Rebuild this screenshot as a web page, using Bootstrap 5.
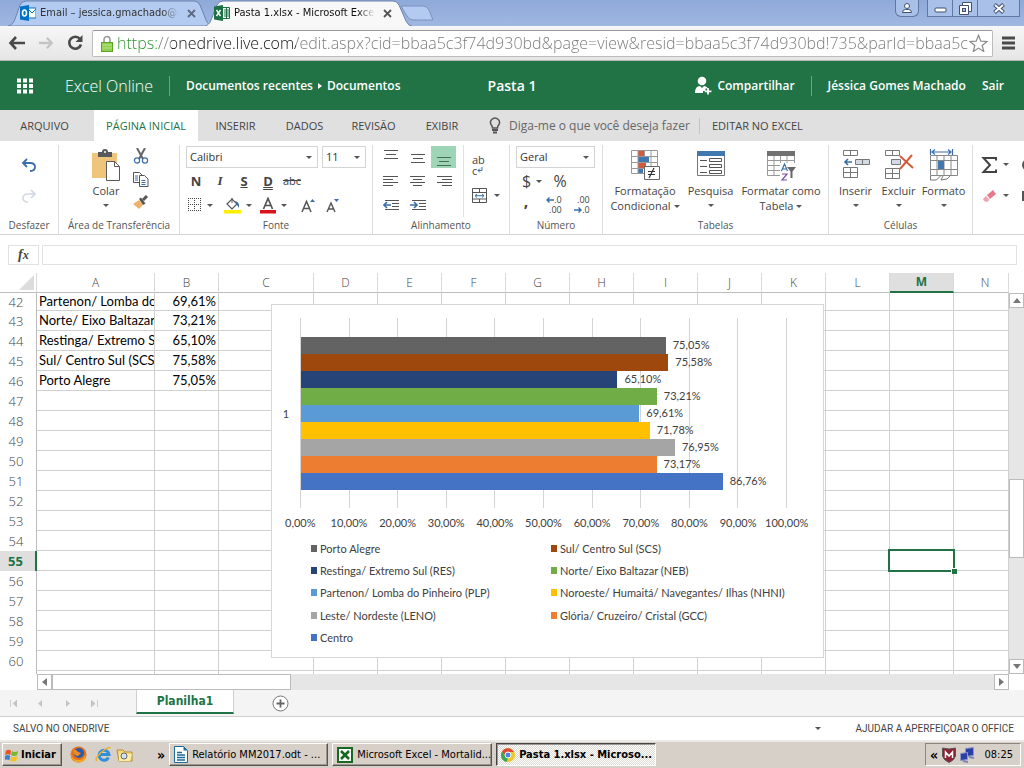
<!DOCTYPE html>
<html lang="pt-BR">
<head>
<meta charset="utf-8">
<meta name="viewport" content="width=device-width, initial-scale=1">
<title>Pasta 1.xlsx - Microsoft Excel Online</title>
<link href="https://cdn.jsdelivr.net/npm/bootstrap@5.3.0/dist/css/bootstrap.min.css" rel="stylesheet">
<style>
:root{--ui:"Open Sans","Noto Sans",sans-serif;--win:"DejaVu Sans Condensed","DejaVu Sans",sans-serif;--calc:Lato,"Open Sans",sans-serif;--green:#217346;--line:#d4d4d4}
body{font:11px/16px var(--ui);color:#444;background:#fff;overflow:hidden}
button,input,select{font:inherit;color:inherit;background:none;border:0;padding:0;margin:0;border-radius:0}
a{color:inherit;text-decoration:none}
svg{display:block;flex:none}
.caret{width:0;height:0;border:3px solid transparent;border-top-color:#555;border-bottom:0;flex:none}
.screen>*{flex-shrink:0}
.screen>main{flex:1 1 0;min-height:0}

/* browser window */
.strip{height:26px;background:linear-gradient(#8fa9d8,#a0b7e2);font:11px/16px var(--win);color:#333}
.btab{position:relative;height:26px}
.btab>svg.shape{position:absolute;inset:0;width:100%;height:100%}
.btab>:not(.shape){position:relative}
.btab .title{overflow:hidden;white-space:nowrap;-webkit-mask-image:linear-gradient(to right,#000 88%,transparent)}
.t-mail{width:204px;padding:0 12px 0 12px}.t-xls{width:206px;margin-left:-6px;padding:0 20px 0 8px;color:#111;z-index:1}
.wbtn{height:17px;border:1px solid #62779f;border-top:0;display:flex;align-items:center;justify-content:center;background:#a9c0e8}
.toolbar{height:35px;background:linear-gradient(#f7f7f7,#e6e6e6);border-bottom:1px solid #b8b8b8}
.urlbox{height:27px;background:#fff;border:1px solid #bcbcbc;border-top-color:#999;border-radius:2px}
.urlbox input{font:16px/22px "Open Sans",sans-serif;font-weight:300;min-width:0;color:transparent;background:linear-gradient(to right,#2a8f2a 0 43px,#777 43px 54px,#111 54px 179px,#777 179px);-webkit-background-clip:text;background-clip:text}

/* application header */
.apphead{height:49px;background:var(--green);color:#fff;font:600 12px/16px var(--ui)}
.apphead .brand{font-weight:300;font-size:16px}
.apphead .docname{font-size:14px}
.apphead .vr-thin{width:1px;height:20px;background:#6fa287}
.crumbs{gap:5px}
.crumb-arrow{width:0;height:0;border:3px solid transparent;border-left:4px solid #fff;border-right:0}

.rtabs{height:31px;background:#e0e0e0}
.rtabs .rt{height:31px;text-align:center}
.rtabs .rt.on{background:#fff;color:var(--green)}
.rtabs input{font-size:12px}
.rtabs input::placeholder{color:#666;opacity:1}
.ribbon{height:94px;padding-top:4px;border-bottom:1px solid var(--line)}
.rgroup{border-right:1px solid #dcdcdc;height:89px;display:flex;flex-direction:column;flex:none}
.rgroup .gbody{height:72px;display:flex;flex:none}
.rgroup .glabel{font-size:10px;line-height:17px;text-align:center;color:#555;white-space:nowrap}
.r24{height:24px;display:flex;align-items:center}
.r31{height:31px;display:flex;align-items:center}
.ib{width:24px;height:22px;display:inline-flex;align-items:center;justify-content:center;flex:none}
.ibw{width:36px;height:22px;display:inline-flex;align-items:center;gap:5px;padding-left:4px;flex:none}
.al{width:27px}
.al.on{background:#9fd5b7;width:25px}
.dec{font-size:9px;line-height:10px}
.wrapt{flex-direction:column;justify-content:center;align-items:flex-start;line-height:11px}
.bigbtn{display:flex;flex-direction:column;align-items:center;padding-top:4px;line-height:15px;white-space:nowrap}
.bigbtn svg{height:32px;margin-bottom:2px}
.bigbtn .caret{margin-top:6px}
.bigbtn .ln{display:flex;align-items:center;gap:3px}
.bigbtn .ln .caret{margin-top:2px}
.pick{position:relative;height:22px;border:1px solid var(--line);display:flex}
.pick select{appearance:none;width:100%;padding-left:3px;color:#333;line-height:20px}
.pick::after{content:"";position:absolute;right:5px;top:9px;border:3px solid transparent;border-top-color:#555;border-bottom:0;pointer-events:none}
.fmt{font-size:13px;color:#444}

.fbar{padding:10px 7px 8px 8px;gap:3px}
.fbar>*{height:20px;border:1px solid #e1e1e1}
.fbar button{width:31px;font:italic 700 14px/16px "Liberation Serif",serif}

/* worksheet */
.sheet{position:relative;min-height:0;overflow:hidden}
.gridt{table-layout:fixed;width:100%;border-collapse:separate;border-spacing:0;font:13px/20px var(--calc);color:#000}
.gridt th{font:300 12px/18px var(--ui);color:#444;text-align:center;border-right:1px solid #dadada;border-bottom:1px solid #cfcfcf;padding:0;white-space:nowrap}
.gridt thead th{height:20px;border-bottom-color:#bdbdbd}
.gridt thead th:last-child{padding-left:8px}
.gridt tbody th{border-bottom:0;border-right-color:#bdbdbd;padding-right:4px;font-size:13px;line-height:19px}
.gridt td{height:20px;line-height:19px;padding:0 2px;border-right:1px solid #d0d0d0;border-bottom:1px solid #d0d0d0;overflow:hidden;white-space:nowrap}
.gridt tr.cut td,.gridt tr.cut th{height:18px;line-height:17px}
.gridt .num{text-align:right}
.gridt thead th.cur{background:#dfdfdf;color:var(--green);font-weight:700;border-bottom:2px solid var(--green)}
.gridt tbody th.cur{background:#dfdfdf;color:var(--green);font-weight:700;border-right:2px solid var(--green)}
.gridt td.cur{position:relative;overflow:visible}
.gridt td.cur::before{content:"";position:absolute;inset:-2px;border:2px solid var(--green)}
.gridt td.cur::after{content:"";position:absolute;right:-4px;bottom:-4px;width:6px;height:6px;background:var(--green);border:solid #fff;border-width:1px 0 0 1px}
.corner{width:0;height:0;border:solid transparent;border-width:0 0 15px 15px;border-bottom-color:#dcdcdc;margin:0 2px 0 auto}
.chart{position:absolute;left:271px;top:31px;width:553px;background:#fff;border:1px solid #d6d6d6;padding:13px 0 8px;font:11px/17px var(--calc);color:#404040}
.plot{position:relative;height:190px;padding:19px 0;margin-right:36px}
.plot .glines{position:absolute;inset:0;display:flex;border-right:1px solid #d4d4d4}
.plot .glines i{flex:1;border-left:1px solid #d4d4d4}
.plot .bar-row{position:relative;display:flex;height:17px;line-height:16px;padding-left:1px}
.plot .bar-row span{margin-left:7px}
.cat{width:28px;text-align:center}
.axis{height:29px;margin:0 12px 0 4px;align-items:center}
.axis span{flex:1 1 0;text-align:center}
.legend{display:grid;grid-template-columns:240px auto;grid-auto-rows:1fr;height:112px;padding-left:39px;align-items:center}
.legend div{display:flex;align-items:center;gap:3px}
.legend b{width:6px;height:7px}
.vbar{width:15px;background:#e6e6e6;margin-top:20px}
.sbtn{width:15px;height:15px;background:#fff;border:1px solid #bbb;display:flex;align-items:center;justify-content:center;flex:none}
.vbar .thumb,.hbar .thumb{background:#fff;border:1px solid #bbb}
.hbar{height:16px;background:#e6e6e6;margin:0 15px 0 37px}
.hbar .sbtn{height:16px}
.tabsbar{height:27px;background:#f4f4f4;border-bottom:1px solid #cfcfcf}
.tabsbar .sh{width:98px;height:24px;background:#fff;color:var(--green);font:700 12px/20px var(--win);border:1px solid #cfcfcf;border-top:0;border-bottom:2px solid var(--green)}
.status{height:23px;font:10px/16px Roboto,sans-serif;color:#444}

/* taskbar */
.taskbar{height:28px;background:#d6d0c8;border-top:2px solid #eceae6;font:11px/16px var(--win);color:#000;padding:1px 3px 2px 2px}
.tb{height:23px;background:#d6d0c8;border:1px solid;border-color:#fff #555 #555 #fff;box-shadow:inset -1px -1px #9a958d;display:flex;align-items:center;white-space:nowrap;overflow:hidden;gap:4px;padding-left:4px}
.tb.start{gap:2px;padding-left:2px;width:60px}
.tb.down{background:repeating-conic-gradient(#fff 0 25%,#dcd8d2 0 50%) 0 0/2px 2px;border-color:#444 #fff #fff #444;box-shadow:inset 1px 1px #999;font-weight:700}
.chev{font-size:14px;font-weight:700}
.tray{height:23px;border:1px solid;border-color:#8a857d #fff #fff #8a857d}
</style>
</head>
<body>
<div class="screen d-flex flex-column vh-100">

<div class="strip d-flex align-items-center">
  <div class="btab t-mail d-flex align-items-center ms-2">
    <svg class="shape" viewBox="0 0 204 26" preserveAspectRatio="none"><path d="M0 26Q5 25 7 19L12 5Q14 1 18 1H186Q190 1 192 5L198 20Q200 25 204 26Z" fill="#b3cbf0" stroke="#6c82ad"/></svg>
    <svg width="16" height="16" viewBox="0 0 16 16"><path d="M8 3h8v10H8z" fill="#fff" stroke="#0072c6"/><path d="M8 4l4 4 4-4" fill="none" stroke="#0072c6"/><path d="M0 1.500l9-1.500v16l-9-1.500z" fill="#0072c6"/><ellipse cx="4.500" cy="8" rx="2" ry="3" fill="none" stroke="#fff" stroke-width="1.600"/></svg>
    <span class="title flex-fill ms-1">Email – jessica.gmachado@outlook.com</span>
    <button aria-label="Fechar guia" class="ms-2 me-1"><svg width="9" height="9" viewBox="0 0 9 9"><path d="M1 1l7 7M8 1l-7 7" stroke="#5d6980" stroke-width="1.800"/></svg></button>
  </div>
  <div class="btab t-xls d-flex align-items-center">
    <svg class="shape" viewBox="0 0 206 26" preserveAspectRatio="none"><path d="M-4 27Q3 26 5 20L11 5Q13 1 17 1H187Q191 1 193 5L200 21Q202 26 208 27Z" fill="#f8f8f8" stroke="#6c82ad"/></svg>
    <svg width="16" height="16" viewBox="0 0 16 16"><path d="M8 2.500h7.500v11H8z" fill="#fff" stroke="#1e7145"/><path d="M10 5h5M10 7h5M10 9h5M10 11h5M12.500 3v10" stroke="#1e7145"/><path d="M0 1.500l9-1.500v16l-9-1.500z" fill="#1e7145"/><path d="M2.500 5l4 6M6.500 5l-4 6" stroke="#fff" stroke-width="1.400"/></svg>
    <span class="title flex-fill ms-1">Pasta 1.xlsx - Microsoft Excel Online</span>
    <button aria-label="Fechar guia" class="ms-2"><svg width="9" height="9" viewBox="0 0 9 9"><path d="M1 1l7 7M8 1l-7 7" stroke="#555" stroke-width="1.800"/></svg></button>
  </div>
  <button aria-label="Nova guia" style="margin-left:-12px"><svg width="36" height="16" viewBox="0 0 36 16"><path d="M1 1h22q4 0 6 4l4 10H13q-4 0-6-4z" fill="#b3cbf0" stroke="#7b92bd"/></svg></button>
  <div class="ms-auto d-flex align-self-start">
    <button class="wbtn rounded-bottom me-2" style="width:24px" aria-label="Perfil"><svg width="12" height="12" viewBox="0 0 12 12"><circle cx="6" cy="4" r="2.500" fill="#fff" stroke="#40506e"/><path d="M1.500 10.500q0-3 3-3h3q3 0 3 3z" fill="#fff" stroke="#40506e"/></svg></button>
    <button class="wbtn" style="width:26px" aria-label="Minimizar"><svg width="13" height="12" viewBox="0 0 13 12"><rect x="1" y="6" width="11" height="4" rx="1" fill="#fff" stroke="#40506e"/></svg></button>
    <button class="wbtn border-start-0" style="width:25px" aria-label="Restaurar"><svg width="14" height="13" viewBox="0 0 14 13"><path d="M4.500 .5h9v9h-3v3h-9v-9h3z" fill="#fff" stroke="#40506e"/><path d="M4.500 3.500h6v6" fill="none" stroke="#40506e"/><rect x="4.500" y="6.500" width="3" height="3" fill="#a9c0e8" stroke="#40506e"/></svg></button>
    <button class="wbtn border-start-0 me-1" style="width:42px" aria-label="Fechar"><svg width="12" height="11" viewBox="0 0 12 11"><path d="M1.500 1.500l9 8M10.500 1.500l-9 8" stroke="#40506e" stroke-width="4"/><path d="M2 2l8 7M10 2l-8 7" stroke="#fff" stroke-width="2"/></svg></button>
  </div>
</div>

<div class="toolbar d-flex align-items-center">
  <button class="ms-2 me-2 pe-1" aria-label="Voltar"><svg width="18" height="14" viewBox="0 0 18 14"><path d="M8 1L2.500 7L8 13M3 7h14" fill="none" stroke="#4a4a4a" stroke-width="2.600"/></svg></button>
  <button class="me-2 pe-1" aria-label="Avançar"><svg width="16" height="14" viewBox="0 0 18 14"><path d="M10 1l5.500 6L10 13M15 7H1" fill="none" stroke="#c4c4c4" stroke-width="2.600"/></svg></button>
  <button class="me-2" aria-label="Recarregar"><svg width="18" height="18" viewBox="0 0 18 18"><path d="M14 5A6 6 0 1 0 15 10.500" fill="none" stroke="#4a4a4a" stroke-width="2.600"/><path d="M16.500 1v7h-7z" fill="#4a4a4a"/></svg></button>
  <div class="urlbox d-flex align-items-center flex-fill" style="min-width:0">
    <svg class="ms-2 me-1" width="12" height="17" viewBox="0 0 12 17"><path d="M3 8V5a3 3.500 0 0 1 6 0v3" fill="none" stroke="#999" stroke-width="1.600"/><rect x=".5" y="7.500" width="11" height="9" fill="#8fd04e" stroke="#5aa428"/><path d="M1 10h10M1 13h10" stroke="#b4e68a"/></svg>
    <input class="flex-fill" aria-label="Endereço" value="https://onedrive.live.com/edit.aspx?cid=bbaa5c3f74d930bd&amp;page=view&amp;resid=bbaa5c3f74d930bd!735&amp;parId=bbaa5c">
    <button class="me-1" aria-label="Favorito"><svg width="19" height="18" viewBox="0 0 19 18"><path d="M9.500 1.200l2.300 5.900 6.200.4-4.800 4 1.600 6-5.300-3.400L4.200 17.500l1.600-6L1 7.500l6.200-.4z" fill="#fff" stroke="#8a8a8a" stroke-width="1.200"/></svg></button>
  </div>
  <button class="ms-2 me-2" aria-label="Menu"><svg width="15" height="14" viewBox="0 0 15 14"><path d="M1 2h13M1 7h13M1 12h13" stroke="#4a4a4a" stroke-width="3"/></svg></button>
</div>

<header class="apphead d-flex align-items-center position-relative">
  <button aria-label="Iniciador de aplicativos" style="margin-left:17px"><svg width="16" height="16" viewBox="0 0 16 16"><path d="M0 2.500h16M0 8h16M0 13.500h16" stroke="#fff" stroke-width="4" stroke-dasharray="4 2"/></svg></button>
  <a href="#" class="brand mx-3 ps-3">Excel Online</a>
  <span class="vr-thin"></span>
  <nav class="crumbs d-flex align-items-center ms-3" aria-label="Local"><a href="#">Documentos recentes</a><span class="crumb-arrow"></span><a href="#">Documentos</a></nav>
  <span class="docname position-absolute start-50 translate-middle-x">Pasta 1</span>
  <button class="ms-auto d-flex align-items-center gap-1"><svg width="18" height="19" viewBox="0 0 18 19"><circle cx="7" cy="5" r="4.300" fill="#fff"/><path d="M0 17q0-7 5-7l2 2 2-2q3 0 4 2.500h-2.500v2.500H8V17z" fill="#fff"/><path d="M13 12v6.500M9.800 15.300h6.700" stroke="#fff" stroke-width="1.800"/></svg>Compartilhar</button>
  <span class="vr-thin ms-3 me-3"></span>
  <a href="#" class="me-3">Jéssica Gomes Machado</a>
  <a href="#" style="margin-right:20px">Sair</a>
</header>

<nav class="rtabs d-flex align-items-center" aria-label="Faixa de opções">
  <button class="rt" style="width:94px;padding-right:5px">ARQUIVO</button>
  <button class="rt on" style="width:104px">PÁGINA INICIAL</button>
  <button class="rt" style="width:75px">INSERIR</button>
  <button class="rt" style="width:63px">DADOS</button>
  <button class="rt" style="width:75px">REVISÃO</button>
  <button class="rt" style="width:62px">EXIBIR</button>
  <label for="tell" class="ps-3 pe-2" aria-label="Ajuda"><svg width="12" height="17" viewBox="0 0 12 17"><path d="M3.500 11Q3.500 9 2 7.500A4.500 4.500 0 1 1 10 7.500Q8.500 9 8.500 11z" fill="none" stroke="#555" stroke-width="1.500"/><path d="M3 13h6M4 15.500h4" stroke="#555" stroke-width="1.800"/></svg></label>
  <input id="tell" style="width:190px" placeholder="Diga-me o que você deseja fazer">
  <span class="bg-secondary opacity-25" style="width:1px;height:16px"></span>
  <button class="rt ms-2 ps-1">EDITAR NO EXCEL</button>
</nav>

<section class="ribbon d-flex overflow-hidden" aria-label="Página inicial">
  <div class="rgroup" style="width:59px">
    <div class="gbody flex-column align-items-center pt-1 pb-1">
      <button class="r31" aria-label="Desfazer"><svg width="16" height="14" viewBox="0 0 16 14"><path d="M6 1L2 5l4 4M2 5h7q5 0 5 4t-5 4" fill="none" stroke="#3b6ea8" stroke-width="1.800"/></svg></button>
      <button class="r31" aria-label="Refazer"><svg width="16" height="14" viewBox="0 0 16 14"><path d="M10 1l4 4-4 4M14 5H7Q2 5 2 9t5 4" fill="none" stroke="#d0d8e2" stroke-width="1.600"/></svg></button>
    </div>
    <div class="glabel">Desfazer</div>
  </div>
  <div class="rgroup" style="width:121px">
    <div class="gbody ps-4">
      <button class="bigbtn ms-2"><svg width="30" height="32" viewBox="0 0 30 32"><path d="M1 4h25v25H1z" fill="#eec57a"/><path d="M7 3h4q0-3 3-3t3 3h4v5H7z" fill="#58595b"/><circle cx="14" cy="3" r="1" fill="#fff"/><path d="M15.500 12.500h8l5 5v14h-13z" fill="#fff" stroke="#58595b"/><path d="M23.500 12.500v5h5" fill="none" stroke="#58595b"/></svg>Colar<span class="caret"></span></button>
      <div class="ms-2">
        <button class="ib r24" aria-label="Recortar"><svg width="16" height="16" viewBox="0 0 16 16"><path d="M4 0l6 11M12 0L6 11" stroke="#666" stroke-width="2"/><circle cx="4" cy="12.500" r="2.600" fill="none" stroke="#3b6ea8" stroke-width="1.200"/><circle cx="12" cy="12.500" r="2.600" fill="none" stroke="#3b6ea8" stroke-width="1.200"/></svg></button>
        <button class="ib r24" aria-label="Copiar"><svg width="16" height="16" viewBox="0 0 16 16"><path d="M.5 1.500h6l3 3v7h-9z" fill="#fff" stroke="#555"/><path d="M6.500 4.500h5l3.500 3.500v7.500h-8.500z" fill="#fff" stroke="#555"/><path d="M2 5h3M2 7h3M2 9h3M8.500 9.500h4M8.500 11.500h4M8.500 13.500h4" stroke="#3b6ea8"/></svg></button>
        <button class="ib r24" aria-label="Pincel de formatação"><svg width="16" height="14" viewBox="0 0 16 14"><path d="M0 9l6-4 4 5-4 4z" fill="#eeb36b"/><path d="M6 4l2-1.500 4.500 6L10 10z" fill="#555"/><path d="M10 5l4-4" stroke="#555" stroke-width="3"/></svg></button>
      </div>
    </div>
    <div class="glabel">Área de Transferência</div>
  </div>
  <div class="rgroup" style="width:193px">
    <div class="gbody flex-column ps-1">
      <div class="r24 gap-1" style="padding-left:2px"><div class="pick" style="width:132px"><select aria-label="Fonte"><option>Calibri</option></select></div><div class="pick" style="width:44px"><select aria-label="Tamanho"><option>11</option></select></div></div>
      <div class="r24"><button class="ib fmt fw-bold">N</button><button class="ib fmt fst-italic fw-bold" style="font-family:'Liberation Serif',serif">I</button><button class="ib fmt fw-bold text-decoration-underline">S</button><button class="ib fmt fw-bold" style="text-decoration:underline double">D</button><button class="ib text-decoration-line-through">abc</button></div>
      <div class="r24">
        <button class="ibw" aria-label="Bordas"><svg width="14" height="14" viewBox="0 0 14 14"><path d="M.5 0v13M6.500 0v13M12.500 0v13M0 .5h13M0 6.500h13M0 12.500h13" stroke="#444" stroke-dasharray="1 1"/></svg><span class="caret"></span></button>
        <button class="ibw" aria-label="Cor de preenchimento"><svg width="17" height="17" viewBox="0 0 17 17"><path d="M3 7l5-5 5 5-5 5z" fill="#fff" stroke="#555" stroke-width="1.200"/><path d="M8 6V1" stroke="#555"/><path d="M11 4q5 1 4 7l-2-3z" fill="#3b6ea8"/><path d="M0 13h17v3.500H0z" fill="#ffee00"/></svg><span class="caret"></span></button>
        <button class="ibw" aria-label="Cor da fonte"><svg width="16" height="17" viewBox="0 0 16 17"><path d="M3.500 12L8 1.500l4.500 10.500M5 8.500h6" fill="none" stroke="#555" stroke-width="1.700"/><path d="M0 13h16v3.500H0z" fill="#d8131b"/></svg><span class="caret"></span></button>
        <button class="ib ms-1" aria-label="Aumentar fonte"><svg width="14" height="15" viewBox="0 0 14 15"><path d="M1 14L5.500 3.500 10 14M2.500 10.500h6" fill="none" stroke="#555" stroke-width="1.500"/><path d="M9 4l2.500-3L14 4z" fill="#3b6ea8"/></svg></button>
        <button class="ib" aria-label="Diminuir fonte"><svg width="14" height="15" viewBox="0 0 14 15"><path d="M2 14l4-9 4 9M3.500 11h5" fill="none" stroke="#555" stroke-width="1.400"/><path d="M9 1h5l-2.500 3z" fill="#3b6ea8"/></svg></button>
      </div>
    </div>
    <div class="glabel">Fonte</div>
  </div>
  <div class="rgroup" style="width:137px">
    <div class="gbody">
      <div class="border-end" style="width:91px;padding-left:4px">
        <div class="r24"><button class="ib al" aria-label="Em cima"><svg width="15" height="15" viewBox="0 0 15 15"><path d="M1 .5h14M3 4.500h10M1 8.500h14" stroke="#555"/></svg></button><button class="ib al" aria-label="No meio"><svg width="15" height="15" viewBox="0 0 15 15"><path d="M1 4.500h14M3 8.500h10M1 12.500h14" stroke="#555"/></svg></button><button class="ib al on" aria-label="Embaixo"><svg width="15" height="17" viewBox="0 0 15 17"><path d="M1 8.500h14M3 12.500h10M1 16.500h14" stroke="#4a6b58"/></svg></button></div>
        <div class="r24"><button class="ib al" aria-label="Esquerda"><svg width="15" height="12" viewBox="0 0 15 12"><path d="M0 1.500h15M0 4.500h10M0 7.500h15M0 10.500h10" stroke="#555"/></svg></button><button class="ib al" aria-label="Centro"><svg width="15" height="12" viewBox="0 0 15 12"><path d="M0 1.500h15M3 4.500h9M0 7.500h15M3 10.500h9" stroke="#555"/></svg></button><button class="ib al" aria-label="Direita"><svg width="15" height="12" viewBox="0 0 15 12"><path d="M0 1.500h15M5 4.500h10M0 7.500h15M5 10.500h10" stroke="#555"/></svg></button></div>
        <div class="r24"><button class="ib al" aria-label="Diminuir recuo"><svg width="16" height="12" viewBox="0 0 16 12"><path d="M2 1.500h14M9 4.500h7M9 7.500h7M2 10.500h14" stroke="#555"/><path d="M8 6H1M4 3L1 6l3 3" fill="none" stroke="#3b6ea8" stroke-width="1.600"/></svg></button><button class="ib al" aria-label="Aumentar recuo"><svg width="16" height="12" viewBox="0 0 16 12"><path d="M2 1.500h14M9 4.500h7M9 7.500h7M2 10.500h14" stroke="#555"/><path d="M0 6h7M4 3l3 3-3 3" fill="none" stroke="#3b6ea8" stroke-width="1.600"/></svg></button></div>
      </div>
      <div class="pt-1 ps-2">
        <button class="r31 wrapt" aria-label="Quebrar texto"><span>ab</span><span class="d-flex align-items-center">c<svg width="6" height="6" viewBox="0 0 6 6"><path d="M5 0v3.500H1M3 1.500l-2 2 2 2" fill="none" stroke="#3b6ea8"/></svg></span></button>
        <button class="r31" style="gap:7px" aria-label="Mesclar"><svg width="15" height="16" viewBox="0 0 15 16"><path d="M.5 .5h14v14H.5zM.5 4.500h14M.5 11h14M7.500 .5v4M7.500 11v4" fill="none" stroke="#555"/><path d="M3 7.700h9M5 6L3 7.700l2 1.800M10 6l2 1.700-2 1.800" fill="none" stroke="#3b6ea8"/></svg><span class="caret"></span></button>
      </div>
    </div>
    <div class="glabel">Alinhamento</div>
  </div>
  <div class="rgroup" style="width:93px">
    <div class="gbody flex-column ps-1">
      <div class="r24" style="padding-left:2px"><div class="pick" style="width:79px"><select aria-label="Formato de número"><option>Geral</option></select></div></div>
      <div class="r24"><button class="ibw fs-6 ps-2" style="width:34px">$<span class="caret"></span></button><button class="ib fs-6">%</button></div>
      <div class="r24"><button class="ib fs-6 fw-bold lh-1 pb-2" aria-label="Milhar">,</button><button class="ib dec ms-1" aria-label="Aumentar casas decimais"><span><span class="d-flex align-items-center"><svg width="8" height="6" viewBox="0 0 8 6"><path d="M8 3H1M3.500 .5L1 3l2.500 2.500" fill="none" stroke="#3b6ea8" stroke-width="1.400"/></svg>.0</span><span class="d-block text-end">.00</span></span></button><button class="ib dec ms-1" aria-label="Diminuir casas decimais"><span><span class="d-block text-end">.00</span><span class="d-flex align-items-center"><svg width="8" height="6" viewBox="0 0 8 6"><path d="M0 3h7M4.500 .5L7 3 4.500 5.500" fill="none" stroke="#3b6ea8" stroke-width="1.400"/></svg>.0</span></span></button></div>
    </div>
    <div class="glabel">Número</div>
  </div>
  <div class="rgroup" style="width:226px">
    <div class="gbody justify-content-center">
      <button class="bigbtn" style="width:74px"><svg width="30" height="32" viewBox="0 0 30 32"><path d="M1 1h27v24H1z" fill="#fff"/><path d="M8 1h6v6H8zM8 13h8v6H8z" fill="#d35b3b"/><path d="M8 7h11v6H8zM8 19h5v6H8z" fill="#4278b0"/><path d="M1.500 1.500h26v23h-26zM1.500 7.500h26M1.500 13.500h26M1.500 19.500h26M8 1v24M14.500 1v6M21 1v24" fill="none" stroke="#999"/><path d="M14.500 17.500h15v13h-15z" fill="#fff" stroke="#666"/><path d="M18 22.500h7M18 25.500h7M24 19l-5 10" stroke="#333" stroke-width="1.200"/></svg>Formatação<span class="ln">Condicional<span class="caret"></span></span></button>
      <button class="bigbtn" style="width:57px"><svg width="30" height="32" viewBox="0 0 30 32"><path d="M1.500 2.500h27v24h-27z" fill="#fff" stroke="#777"/><path d="M1 2h28v5H1z" fill="#4278b0"/><path d="M4 11.500h7M4 17.500h7M4 23.500h7" stroke="#555"/><path d="M13.500 9.500h12v3h-12zM13.500 15.500h12v3h-12zM13.500 21.500h12v3h-12z" fill="#fff" stroke="#555"/></svg>Pesquisa<span class="caret"></span></button>
      <button class="bigbtn" style="width:84px"><svg width="30" height="32" viewBox="0 0 30 32"><path d="M1.500 2.500h27v24h-27zM1.500 11.500h27M1.500 16.500h27M1.500 21.500h27M8 7v19M14.500 7v19M21 7v19" fill="#fff" stroke="#999"/><path d="M1 2h28v5H1z" fill="#707070"/><path d="M14 14h16v18H14z" fill="#fff"/><path d="M15.500 22l3-7 3 7M16.500 20h4" fill="none" stroke="#3b6ea8" stroke-width="1.200"/><path d="M16 25h5l-5 6h5" fill="none" stroke="#76559b" stroke-width="1.200"/><path d="M21 18h9l-3.500 4.500V29h-2v-6.500z" fill="#666"/></svg>Formatar como<span class="ln">Tabela<span class="caret"></span></span></button>
    </div>
    <div class="glabel">Tabelas</div>
  </div>
  <div class="rgroup" style="width:144px">
    <div class="gbody justify-content-center">
      <button class="bigbtn" style="width:43px"><svg width="28" height="32" viewBox="0 0 28 32"><path d="M1.500 1.500h14v5h-14zM8.500 1.500v5M1.500 18.500h14v10h-14zM8.500 18v10M1.500 23.500h14" fill="none" stroke="#777"/><path d="M13.500 10.500h14v5h-14zM20.500 10v5" fill="#d3dae4" stroke="#777"/><path d="M10 13H3M6 10l-3 3 3 3" fill="none" stroke="#3b6ea8" stroke-width="1.600"/></svg>Inserir<span class="caret"></span></button>
      <button class="bigbtn" style="width:43px"><svg width="30" height="32" viewBox="0 0 30 32"><path d="M1.500 1.500h14v5h-14zM8.500 1.500v5M1.500 19.500h14v10h-14zM8.500 19v10M1.500 24.500h14" fill="none" stroke="#777"/><path d="M7.500 10.500h9v5h-9z" fill="#d3dae4" stroke="#777"/><path d="M16 7l13 12M28 6L16 20" stroke="#d35b3b" stroke-width="2"/></svg>Excluir<span class="caret"></span></button>
      <button class="bigbtn" style="width:47px"><svg width="30" height="32" viewBox="0 0 30 32"><path d="M1.500 6.500h27v20h-27zM1.500 11.500h27M1.500 20.500h27M8 6v20M15 6v20M22 6v20" fill="none" stroke="#888"/><path d="M9 12h6v8H9z" fill="#4278b0"/><path d="M1.500 27v4h6l4-4M12 31l2-4M12 31l6-1 3-3" fill="none" stroke="#777"/><path d="M1.500 0v6M23.500 0v6M3 3h19M6 .5L3 3l3 2.500M19 .5L22 3l-3 2.500" fill="none" stroke="#3b6ea8" stroke-width="1.200"/></svg>Formato<span class="caret"></span></button>
    </div>
    <div class="glabel">Células</div>
  </div>
  <div class="gbody pt-1 ps-2 d-flex">
    <div><button class="r31" style="gap:5px" aria-label="Soma"><svg width="17" height="18" viewBox="0 0 17 18"><path d="M15 4.500V2H2.500l6.500 7-6.500 7H15v-2.500" fill="none" stroke="#444" stroke-width="2"/></svg><span class="caret"></span></button>
    <button class="r31" style="gap:5px" aria-label="Limpar"><svg width="17" height="14" viewBox="0 0 17 14"><path d="M6 6l6-5 3 4-6 5z" fill="#e8788c"/><path d="M5 7l3.500 4L6 13q-3 0-4-3z" fill="#f0a3b0"/></svg><span class="caret"></span></button></div>
    <div class="ms-2 ps-1"><button class="r31" aria-label="Classificar"><svg width="14" height="14"><circle cx="7" cy="7" r="5" fill="none" stroke="#555" stroke-width="2"/></svg></button><button class="r31" aria-label="Localizar"><svg width="14" height="14"><path d="M1 2h10v10H1z" fill="#555"/></svg></button></div>
  </div>
</section>

<div class="fbar d-flex"><button aria-label="Inserir função">f<small>x</small></button><input class="flex-fill" aria-label="Barra de fórmulas"></div>

<main class="d-flex">
  <div class="sheet flex-fill">
    <table class="gridt"><colgroup id="cols"></colgroup><thead><tr id="heads"></tr></thead><tbody id="rows"></tbody></table>
    <figure class="chart m-0">
      <div class="d-flex align-items-center"><div class="cat">1</div><div class="plot flex-fill" id="plot"><div class="glines"><i></i><i></i><i></i><i></i><i></i><i></i><i></i><i></i><i></i><i></i></div></div></div>
      <div class="axis d-flex" id="axis"></div>
      <figcaption class="legend" id="legend"></figcaption>
    </figure>
  </div>
  <div class="vbar d-flex flex-column">
    <div class="sbtn"><svg width="8" height="5"><path d="M0 5l4-5 4 5z" fill="#777"/></svg></div>
    <div style="flex:171"></div><div class="thumb" style="flex:78"></div><div style="flex:101"></div>
    <div class="sbtn"><svg width="8" height="5"><path d="M0 0l4 5 4-5z" fill="#777"/></svg></div>
  </div>
</main>
<div class="hbar d-flex">
  <div class="sbtn"><svg width="5" height="8"><path d="M5 0L0 4l5 4z" fill="#777"/></svg></div><div class="thumb" style="flex:237"></div><div style="flex:704"></div>
  <div class="sbtn"><svg width="5" height="8"><path d="M0 0l5 4-5 4z" fill="#777"/></svg></div>
</div>
<div class="tabsbar d-flex align-items-start">
  <div class="d-flex align-self-center" style="width:136px;padding-left:10px;gap:20px">
    <button aria-label="Primeira"><svg width="7" height="7"><path d="M.5 0v7M7 0L3 3.500 7 7z" fill="#c4c4c4" stroke="#c4c4c4" stroke-width=".8"/></svg></button>
    <button aria-label="Anterior"><svg width="7" height="7"><path d="M5 0L1 3.500 5 7z" fill="#c4c4c4"/></svg></button>
    <button aria-label="Próxima"><svg width="7" height="7"><path d="M2 0l4 3.500L2 7z" fill="#c4c4c4"/></svg></button>
    <button aria-label="Última"><svg width="7" height="7"><path d="M6.500 0v7M0 0l4 3.500L0 7z" fill="#c4c4c4" stroke="#c4c4c4" stroke-width=".8"/></svg></button>
  </div>
  <button class="sh">Planilha1</button>
  <button class="align-self-center" style="margin-left:38px" aria-label="Nova planilha"><svg width="17" height="17" viewBox="0 0 17 17"><circle cx="8.500" cy="8.500" r="7.500" fill="#fff" stroke="#777"/><path d="M8.500 4.500v8M4.500 8.500h8" stroke="#666" stroke-width="1.800"/></svg></button>
</div>
<div class="status d-flex align-items-center" style="padding:0 10px 0 13px"><span>SALVO NO ONEDRIVE</span><span class="caret ms-auto" style="margin-right:35px"></span><a href="#">AJUDAR A APERFEIÇOAR O OFFICE</a></div>

<div class="taskbar d-flex align-items-center">
  <button class="tb start fw-bold"><svg width="14" height="14" viewBox="0 0 16 16"><path d="M1 3q3-2 6 0L6 8Q3 6 0 8z" fill="#e8542c"/><path d="M8 3.500q3 2 7 0L14 8q-4 2-7 0z" fill="#7ab92f"/><path d="M0 9q3-2 6 0l-1 5q-3-2-6 0z" fill="#3c80d6"/><path d="M7 9.500q3 2 7 0l-1 5q-4 2-7 0z" fill="#f5c320"/></svg>Iniciar</button>
  <button class="ms-2" aria-label="Firefox"><svg width="17" height="17" viewBox="0 0 17 17"><circle cx="8.500" cy="8.500" r="8" fill="#e4701e"/><circle cx="9" cy="7" r="5" fill="#2a5ba8"/><path d="M1 5q0 10 9 9 5-1 5-6 2 8-6 8.500Q0 16 1 5z" fill="#f5a623"/><path d="M3 4q3-1 5 2l3 1-3 3q-4 0-5-6z" fill="#f08a24"/></svg></button>
  <button class="ms-2" aria-label="Internet Explorer"><svg width="17" height="17" viewBox="0 0 17 17"><path d="M13.500 11.500A5 5 0 1 1 14 8.500H5" fill="none" stroke="#2f8fdb" stroke-width="3"/><path d="M2 15Q-1 13 6 6.500 14 0 15.500 2" fill="none" stroke="#e9b52c" stroke-width="1.500"/></svg></button>
  <button class="ms-1" aria-label="Explorador"><svg width="17" height="16" viewBox="0 0 17 16"><path d="M1 3h6l2 2h7v9H3z" fill="#f6d778" stroke="#b98d2c"/><path d="M3 7h13l-2 7H3z" fill="#fbeaa8"/><circle cx="8" cy="9" r="3" fill="#cfe4f5" stroke="#666"/></svg></button>
  <span class="chev ms-4 me-1">»</span>
  <button class="tb" style="width:159px"><svg width="14" height="17" viewBox="0 0 14 17"><path d="M.5 .5h9l4 4v12H.5z" fill="#fff" stroke="#1d6a99"/><path d="M9.500 .5v4h4z" fill="#1d6a99"/><path d="M3 6.500h5M3 9h8M3 11.500h8M3 14h8" stroke="#1d6a99" stroke-width="1.300"/></svg>Relatório MM2017.odt - ...</button>
  <button class="tb ms-1" style="width:160px"><svg width="16" height="16" viewBox="0 0 16 16"><path d="M1 1h14v14H1z" fill="#fff" stroke="#17691f" stroke-width="2"/><path d="M4 4l8 8M12 4l-8 8" stroke="#17691f" stroke-width="2.600"/></svg>Microsoft Excel - Mortalid...</button>
  <button class="tb down ms-1" style="width:160px"><svg width="14" height="14" viewBox="0 0 14 14"><circle cx="7" cy="7" r="7" fill="#f2c629"/><path d="M1 3.500A7 7 0 0 1 13 4H7L4 8z" fill="#dd4b38"/><path d="M1 3.500L5 9l2 1-1.500 4A7 7 0 0 1 1 3.500z" fill="#3aa757"/><circle cx="7" cy="7" r="3" fill="#4a86e8" stroke="#fff"/></svg>Pasta 1.xlsx - Microso...</button>
  <div class="tray d-flex align-items-center ms-auto" style="width:96px;padding:0 7px 0 4px"><span class="chev">«</span>
    <svg class="ms-1" width="14" height="16" viewBox="0 0 14 16"><path d="M.5 1Q7 3 13.500 1v8q-1 4-6.500 6.500Q1.500 13 .5 9z" fill="#8d2136" stroke="#555"/><path d="M3.500 11V5L7 9l3.500-4v6" fill="none" stroke="#fff" stroke-width="1.500"/></svg>
    <svg class="ms-1" width="15" height="16" viewBox="0 0 15 16"><path d="M5.500 1.500l8-1v8l-8 1z" fill="#2c3fa5" stroke="#8c98c8"/><path d="M.5 6.500l7-1v7l-7 1z" fill="#2c3fa5" stroke="#8c98c8"/><path d="M3 14l5 1M9 10l5 1" stroke="#7c88b0" stroke-width="2"/></svg>
    <span class="ms-auto">08:25</span></div>
</div>
</div>

<script>
const widths = [37,118,64,95,64,64,64,64,64,64,64,64,64,64,null];
document.getElementById('cols').innerHTML = widths.map(w => w ? `<col style="width:${w}px">` : '<col>').join('');
document.getElementById('heads').innerHTML = '<th aria-label="Selecionar tudo"><div class="corner"></div></th>' +
  [...'ABCDEFGHIJKLMN'].map(c => `<th${c === 'M' ? ' class="cur"' : ''}>${c}</th>`).join('');
const cells = {42:['Partenon/ Lomba do Pinheiro (PLP)','69,61%'],43:['Norte/ Eixo Baltazar (NEB)','73,21%'],44:['Restinga/ Extremo Sul (RES)','65,10%'],45:['Sul/ Centro Sul (SCS)','75,58%'],46:['Porto Alegre','75,05%']};
let html = '';
for (let r = 42; r <= 60; r++) {
  const d = cells[r] || ['',''];
  html += `<tr${r === 42 ? ' class="cut"' : ''}><th${r === 55 ? ' class="cur"' : ''}>${r}</th><td>${d[0]}</td><td class="num">${d[1]}</td>`;
  for (let c = 2; c < 14; c++) html += r === 55 && c === 12 ? '<td class="cur"></td>' : '<td></td>';
  html += '</tr>';
}
html += '<tr><th></th>' + '<td></td>'.repeat(14) + '</tr>';
document.getElementById('rows').innerHTML = html;

const series = [['Porto Alegre',75.05,'#636363'],['Sul/ Centro Sul (SCS)',75.58,'#9e480e'],['Restinga/ Extremo Sul (RES)',65.10,'#264478'],['Norte/ Eixo Baltazar (NEB)',73.21,'#70ad47'],['Partenon/ Lomba do Pinheiro (PLP)',69.61,'#5b9bd5'],['Noroeste/ Humaitá/ Navegantes/ Ilhas (NHNI)',71.78,'#ffc000'],['Leste/ Nordeste (LENO)',76.95,'#a5a5a5'],['Glória/ Cruzeiro/ Cristal (GCC)',73.17,'#ed7d31'],['Centro',86.76,'#4472c4']];
const pct = v => v.toFixed(2).replace('.', ',') + '%';
document.getElementById('plot').innerHTML += series.map(s => `<div class="bar-row"><div style="width:${s[1]}%;background:${s[2]}"></div><span>${pct(s[1])}</span></div>`).join('');
document.getElementById('axis').innerHTML = [0,10,20,30,40,50,60,70,80,90,100].map(v => `<span>${pct(v)}</span>`).join('');
document.getElementById('legend').innerHTML = series.map(s => `<div><b style="background:${s[2]}"></b>${s[0]}</div>`).join('');
</script>
<script src="https://cdn.jsdelivr.net/npm/bootstrap@5.3.0/dist/js/bootstrap.bundle.min.js"></script>
</body>
</html>
